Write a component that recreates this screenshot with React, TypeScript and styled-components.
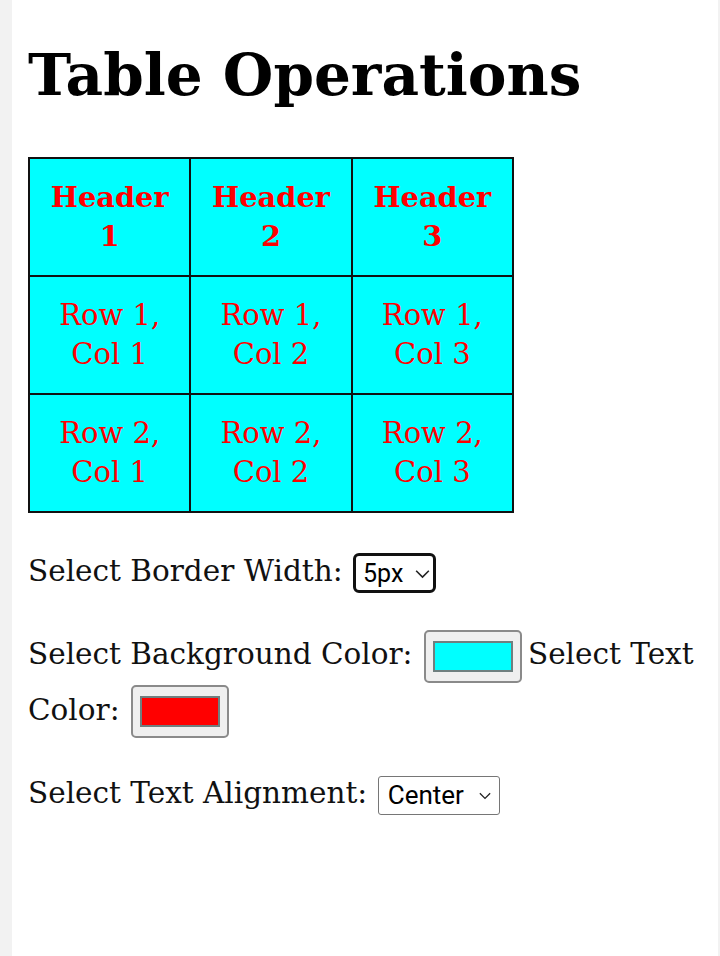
import React, { useState } from "react";
import styled, { createGlobalStyle } from "styled-components";

const GlobalStyle = createGlobalStyle`
  html, body { margin: 0; padding: 0; background: #f2f2f2; }
  #root { min-height: 956px; }
`;

const Page = styled.div`
  margin: 0 2px 0 12px;
  min-height: 956px;
  background: #ffffff;
  padding: 37px 0 0 16px;
  box-sizing: border-box;
  font-family: "DejaVu Serif", "Liberation Serif", serif;
  color: #111;
`;

const Title = styled.h1`
  margin: 0 0 44px;
  font-size: 58px;
  line-height: 76px;
  font-weight: 700;
  color: #000;
`;

const Grid = styled.table<{ $bg: string; $fg: string; $align: string }>`
  border-collapse: collapse;
  width: 486px;
  background: ${(p) => p.$bg};
  color: ${(p) => p.$fg};
  text-align: ${(p) => p.$align};
  border: 2px solid #111;

  th, td {
    border: 2px solid #111;
    width: 33.33%;
    height: 118px;
    padding: 0 10px;
    line-height: 39px;
    box-sizing: border-box;
  }
  th { font-weight: 700; font-size: 28.8px; }
  td { font-weight: 400; font-size: 29px; }
`;

const Controls = styled.div`
  font-size: 29.5px;
  color: #111;
  margin-top: 31px;
`;

const Field = styled.p<{ $after: number }>`
  margin: 0 0 ${(p) => p.$after}px;
  line-height: 54px;
`;

const SelectWrap = styled.span`
  position: relative;
  display: inline-block;
  vertical-align: middle;
  margin-left: 1px;
  line-height: 0;
`;

const NativeSelect = styled.select<{ $strong?: boolean; $fs: number; $w: number; $h: number; $pl: number }>`
  appearance: none;
  -webkit-appearance: none;
  font-family: Roboto, "Noto Sans", sans-serif;
  font-size: ${(p) => p.$fs}px;
  color: #000;
  background: #fff;
  width: ${(p) => p.$w}px;
  height: ${(p) => p.$h}px;
  padding: 0 24px 0 ${(p) => p.$pl}px;
  border: ${(p) => (p.$strong ? "3px solid #111" : "1px solid #767676")};
  border-radius: ${(p) => (p.$strong ? "6px" : "3px")};
  box-sizing: border-box;
  outline: none;
  margin: 0;
`;

const Chevron = styled.svg<{ $right: number }>`
  position: absolute;
  right: ${(p) => p.$right}px;
  top: 50%;
  transform: translateY(-40%);
  pointer-events: none;
`;

const ColorInput = styled.input`
  -webkit-appearance: none;
  appearance: none;
  width: 98px;
  height: 53px;
  padding: 9px 7px;
  margin: 0 6px 0 2px;
  vertical-align: middle;
  background: #efefef;
  border: 2px solid #8a8a8a;
  border-radius: 5px;
  box-sizing: border-box;
  cursor: pointer;

  &::-webkit-color-swatch-wrapper { padding: 0; }
  &::-webkit-color-swatch {
    border: 2px solid #6f7f7f;
    border-radius: 0;
  }
`;

const ChevronIcon = ({ right, w }: { right: number; w: number }) => (
  <Chevron $right={right} width={w} height={w / 2 + 2} viewBox="0 0 14 9">
    <path d="M1 1.5 L7 7.5 L13 1.5" fill="none" stroke="#222" strokeWidth="1.5" />
  </Chevron>
);

export default function App() {
  const [bw, setBw] = useState("5px");
  const [bg, setBg] = useState("#00ffff");
  const [fg, setFg] = useState("#ff0000");
  const [align, setAlign] = useState("center");

  const rows = [
    ["Row 1, Col 1", "Row 1, Col 2", "Row 1, Col 3"],
    ["Row 2, Col 1", "Row 2, Col 2", "Row 2, Col 3"],
  ];

  return (
    <>
      <GlobalStyle />
      <Page>
        <Title>Table Operations</Title>
        <Grid $bg={bg} $fg={fg} $align={align}>
          <thead>
            <tr>
              <th>Header 1</th>
              <th>Header 2</th>
              <th>Header 3</th>
            </tr>
          </thead>
          <tbody>
            {rows.map((r, i) => (
              <tr key={i}>
                {r.map((c) => (
                  <td key={c}>{c}</td>
                ))}
              </tr>
            ))}
          </tbody>
        </Grid>
        <Controls>
          <Field $after={29}>
            Select Border Width:{" "}
            <SelectWrap>
              <NativeSelect $strong $fs={25} $w={83} $h={40} $pl={7} value={bw} onChange={(e) => setBw(e.target.value)}>
                <option value="1px">1px</option>
                <option value="3px">3px</option>
                <option value="5px">5px</option>
              </NativeSelect>
              <ChevronIcon right={6} w={15} />
            </SelectWrap>
          </Field>
          <Field $after={28}>
            Select Background Color:{" "}
            <ColorInput type="color" value={bg} onChange={(e) => setBg(e.target.value)} />
            Select Text Color:{" "}
            <ColorInput type="color" value={fg} onChange={(e) => setFg(e.target.value)} />
          </Field>
          <Field $after={28}>
            Select Text Alignment:{" "}
            <SelectWrap>
              <NativeSelect $fs={26} $w={122} $h={39} $pl={9} value={align} onChange={(e) => setAlign(e.target.value)}>
                <option value="left">Left</option>
                <option value="center">Center</option>
                <option value="right">Right</option>
              </NativeSelect>
              <ChevronIcon right={9} w={12} />
            </SelectWrap>
          </Field>
        </Controls>
      </Page>
    </>
  );
}
